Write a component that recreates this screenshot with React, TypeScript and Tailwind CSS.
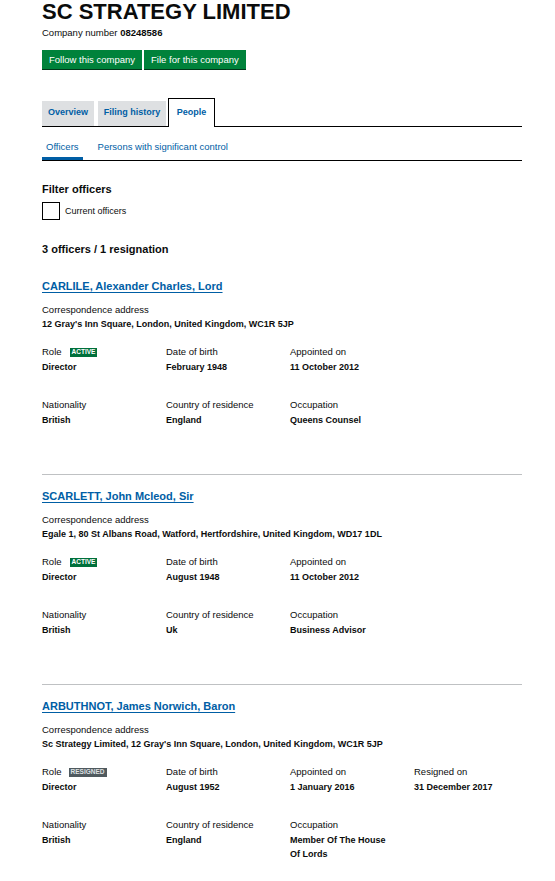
import type { ReactNode } from 'react';

type Officer = {
  name: string;
  address: string;
  status: 'ACTIVE' | 'RESIGNED';
  dob: string;
  appointed: string;
  resigned?: string;
  nationality: string;
  country: string;
  occupation: string;
};

const officers: Officer[] = [
  {
    name: 'CARLILE, Alexander Charles, Lord',
    address: "12 Gray's Inn Square, London, United Kingdom, WC1R 5JP",
    status: 'ACTIVE',
    dob: 'February 1948',
    appointed: '11 October 2012',
    nationality: 'British',
    country: 'England',
    occupation: 'Queens Counsel',
  },
  {
    name: 'SCARLETT, John Mcleod, Sir',
    address: 'Egale 1, 80 St Albans Road, Watford, Hertfordshire, United Kingdom, WD17 1DL',
    status: 'ACTIVE',
    dob: 'August 1948',
    appointed: '11 October 2012',
    nationality: 'British',
    country: 'Uk',
    occupation: 'Business Advisor',
  },
  {
    name: 'ARBUTHNOT, James Norwich, Baron',
    address: "Sc Strategy Limited, 12 Gray's Inn Square, London, United Kingdom, WC1R 5JP",
    status: 'RESIGNED',
    dob: 'August 1952',
    appointed: '1 January 2016',
    resigned: '31 December 2017',
    nationality: 'British',
    country: 'England',
    occupation: 'Member Of The House Of Lords',
  },
];

function Field({ label, value }: { label: ReactNode; value: string }) {
  return (
    <div className="w-[124px] shrink-0 pr-[20px]">
      <div className="flex h-[14px] items-center text-[9.5px] leading-[14px]">{label}</div>
      <div className="mt-[1px] text-[9px] font-bold leading-[14px]">{value}</div>
    </div>
  );
}

function Badge({ status }: { status: Officer['status'] }) {
  return status === 'ACTIVE' ? (
    <span className="ml-[8px] flex h-[9px] items-center bg-[#00703c] px-[2px] text-[6.5px] font-bold leading-none text-white">
      ACTIVE
    </span>
  ) : (
    <span className="ml-[7px] flex h-[9px] items-center bg-[#505a5f] px-[2px] text-[6.5px] font-bold leading-none text-[#dee0e2]">
      RESIGNED
    </span>
  );
}

function OfficerCard({ o }: { o: Officer }) {
  return (
    <div>
      <a className="block w-fit text-[11px] font-bold leading-[16px] text-[#005ea5] underline decoration-1 underline-offset-[2px]">
        {o.name}
      </a>
      <div className="mt-[9px] text-[9.5px] leading-[14px]">Correspondence address</div>
      <div className="text-[9px] font-bold leading-[14px]">{o.address}</div>

      <div className="mt-[14px] flex">
        <Field
          label={
            <>
              Role <Badge status={o.status} />
            </>
          }
          value="Director"
        />
        <Field label="Date of birth" value={o.dob} />
        <Field label="Appointed on" value={o.appointed} />
        {o.resigned && <Field label="Resigned on" value={o.resigned} />}
      </div>

      <div className="mt-[24px] flex">
        <Field label="Nationality" value={o.nationality} />
        <Field label="Country of residence" value={o.country} />
        <Field label="Occupation" value={o.occupation} />
      </div>
    </div>
  );
}

export default function App() {
  return (
    <div className="min-h-screen w-[555px] bg-white px-[42px] pr-[33px] font-['Liberation_Sans',Arial,sans-serif] text-[#0b0c0c]">
      {/* Header */}
      <h1 className="text-[22px] font-bold leading-[24px]">SC STRATEGY LIMITED</h1>
      <p className="mt-[2px] text-[9.5px] leading-[14px]">
        Company number <span className="font-bold">08248586</span>
      </p>

      <div className="mt-[10px] flex gap-[2px]">
        <button className="h-[20px] border-b border-[#003618] bg-[#00823b] px-[7px] text-[9.5px] leading-[19px] text-white">
          Follow this company
        </button>
        <button className="h-[20px] border-b border-[#003618] bg-[#00823b] px-[7px] text-[9.5px] leading-[19px] text-white">
          File for this company
        </button>
      </div>

      {/* Main tabs */}
      <div className="mt-[28px] flex items-end border-b border-black text-[9px] font-bold text-[#005ea5]">
        <div className="h-[25px] w-[52px] bg-[#dee0e2] text-center leading-[22px]">Overview</div>
        <div className="ml-[4px] h-[25px] w-[68px] bg-[#dee0e2] text-center leading-[22px]">Filing history</div>
        <div className="-mb-px ml-[2px] h-[29px] w-[47px] border border-b-0 border-black bg-white pt-[5px] text-center leading-[16px]">
          People
        </div>
      </div>

      {/* Sub tabs */}
      <div className="flex border-b border-black text-[9.5px] leading-[14px] text-[#005ea5]">
        <div className="border-b-[3px] border-[#005ea5] px-[4px] pt-[13px] pb-[3px]">Officers</div>
        <div className="ml-[11px] px-[4px] pt-[13px] pb-[6px]">Persons with significant control</div>
      </div>

      {/* Filter */}
      <h2 className="mt-[21px] text-[11px] font-bold leading-[14px]">Filter officers</h2>
      <label className="mt-[6px] flex items-center">
        <span className="h-[18px] w-[18px] border border-black" />
        <span className="ml-[5px] text-[9px] leading-[14px]">Current officers</span>
      </label>

      <h2 className="mt-[22px] text-[11px] font-bold leading-[14px]">3 officers / 1 resignation</h2>

      {/* Officer list */}
      <div className="mt-[22px]">
        {officers.map((o, i) => (
          <div key={o.name}>
            {i > 0 && <div className="mt-[47px] mb-[13px] h-px bg-[#bfc1c3]" />}
            <OfficerCard o={o} />
          </div>
        ))}
      </div>
    </div>
  );
}
